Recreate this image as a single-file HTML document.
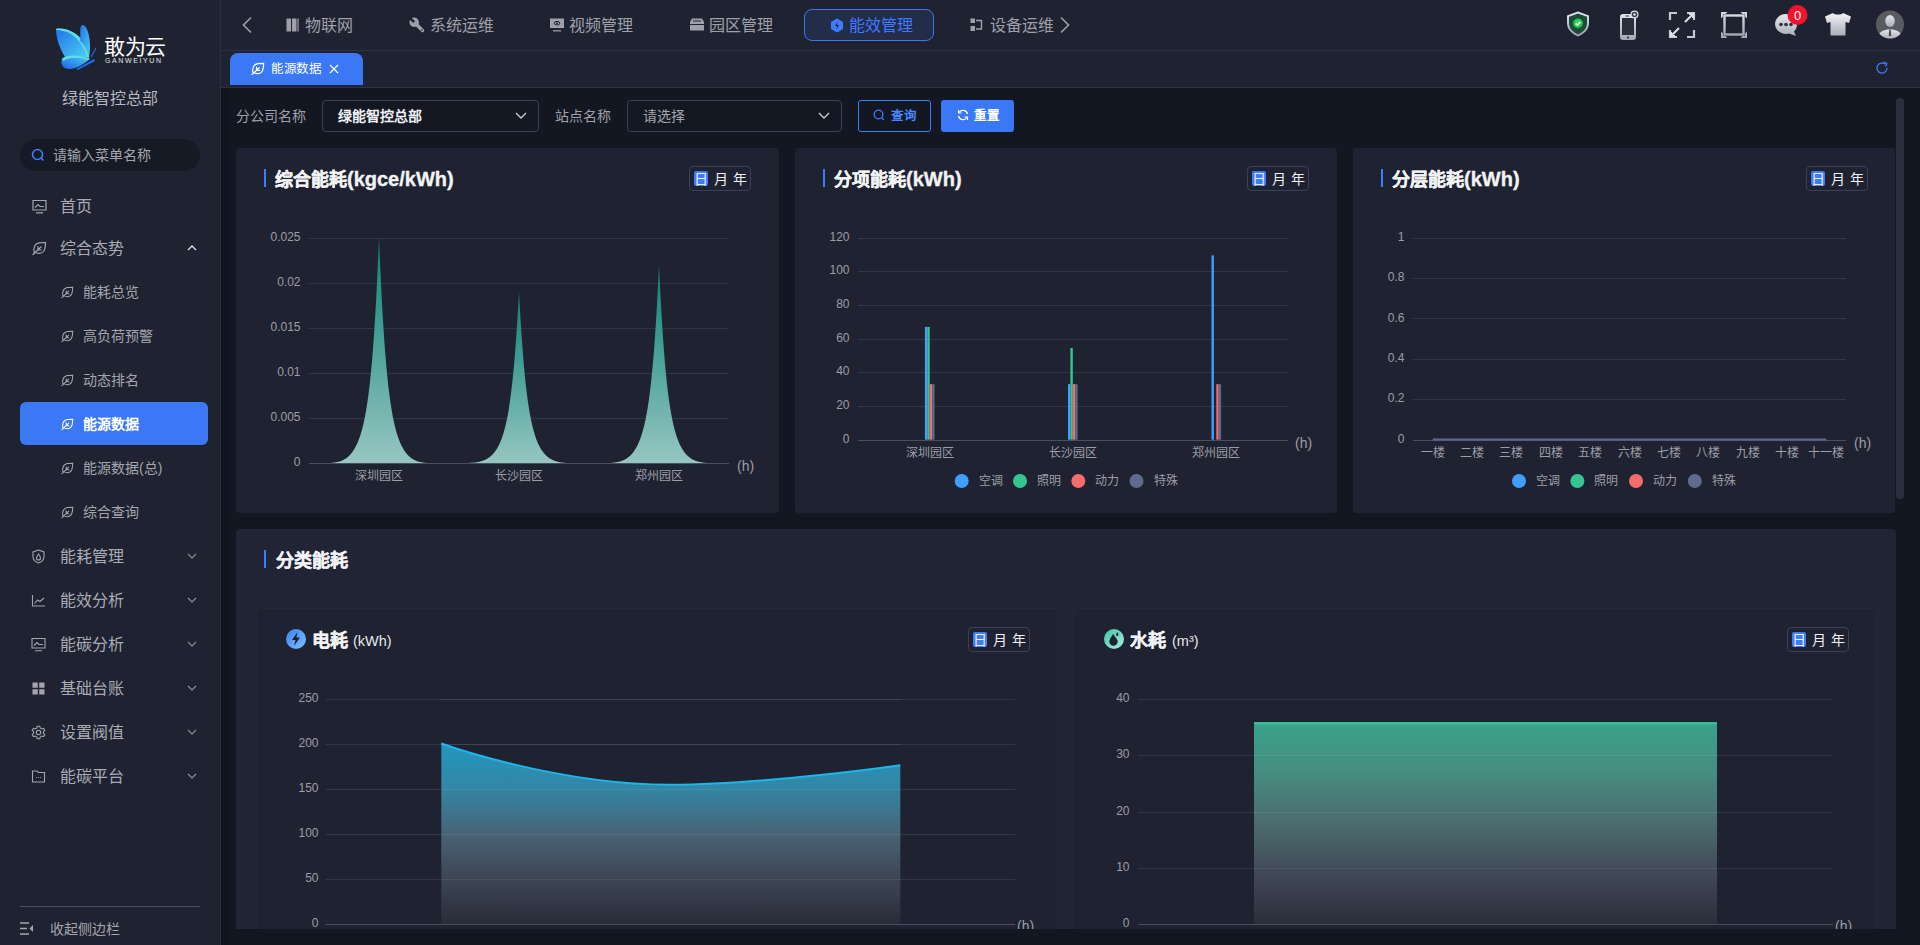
<!DOCTYPE html>
<html lang="zh-CN">
<head>
<meta charset="utf-8">
<style>
*{margin:0;padding:0;box-sizing:border-box}
html,body{width:1920px;height:945px;overflow:hidden;background:#131722;font-family:"Liberation Sans",sans-serif;color:#a3a6ae}
.a{position:absolute}
.t{position:absolute;white-space:nowrap;line-height:20px}
#side{left:0;top:0;width:221px;height:945px;background:#1f2331;border-right:1px solid #2a2f3d}
#head{left:221px;top:0;width:1699px;height:51px;background:#1f2331;border-bottom:1px solid #2c3142}
#tabs{left:221px;top:51px;width:1699px;height:37px;background:#1f2331;border-bottom:1px solid #2c3142}
.card{position:absolute;background:#1f2331;border-radius:4px}
.ttl{position:absolute;font-size:20px;font-weight:bold;color:#f2f3f5;line-height:24px;-webkit-text-stroke:0.35px #f2f3f5}
.bar4{position:absolute;width:2px;height:18px;background:#3d7bff}
.ttl span{font-size:20px}
.dmy{position:absolute;width:62px;height:25px;border:1px solid #384158;border-radius:4px}
.dmy i{position:absolute;font-style:normal;font-size:14px;color:#f0f1f4;line-height:16px;top:4px}
.dmy b{position:absolute;left:4px;top:4px;width:14px;height:15px;background:#3d7bff;border-radius:2px}
.menu{font-size:16px;color:#a9acb4}
.sub{font-size:14px;color:#a3a6ae}
</style>
</head>
<body>
<!-- SIDEBAR -->
<div id="side" class="a">
  <svg class="a" style="left:54px;top:24px" width="44" height="46" viewBox="0 0 44 46">
    <defs>
      <linearGradient id="bw1" x1="0" y1="0" x2="1" y2="1"><stop offset="0" stop-color="#1f74e8"/><stop offset="1" stop-color="#4fd0f5"/></linearGradient>
      <linearGradient id="bw2" x1="0" y1="1" x2="1" y2="0"><stop offset="0" stop-color="#1a62e6"/><stop offset="1" stop-color="#4fd2f4"/></linearGradient>
    </defs>
    <path d="M2,5 C10,3 22,8 28,16 C33,22 35,30 35,34 C28,32 18,33 11,33 C6,25 2,14 2,5Z" fill="url(#bw1)"/>
    <path d="M2,5 C10,3 22,8 28,16 C33,22 35,30 35,34 L33,33 C31,25 25,15 17,10 C12,7 6,6 2,6Z" fill="#5fe0e0"/>
    <path d="M28,1 C33,0 36,12 36,22 C36,28 35,32 35,34 C33,26 30,20 26,17 C27,10 25,3 28,1Z" fill="url(#bw1)"/>
    <path d="M8,35 C14,30 26,31 36,35 C30,40 22,45 15,45 C9,45 6,40 8,35Z" fill="url(#bw2)"/>
    <path d="M8,35 C14,30 26,31 36,35 L34,36 C26,33 15,33 9,37Z" fill="#5fe0e0"/>
    <path d="M22,45 L40,35 L41,37 L24,46Z" fill="#1e6af0"/>
    <path d="M37,33 L42,24" stroke="#1e6af0" stroke-width="1.2"/>
  </svg>
  <div class="t" style="left:104px;top:36px;font-size:21px;color:#fff;line-height:22px;letter-spacing:-0.5px">敢为云</div>
  <div class="t" style="left:105px;top:57px;font-size:7px;color:#e8e8ea;line-height:8px;letter-spacing:1.6px">GANWEIYUN</div>
  <div class="t" style="left:62px;top:89px;font-size:16px;color:#b6b9c1">绿能智控总部</div>
  <div class="a" style="left:20px;top:139px;width:180px;height:32px;border-radius:16px;background:#161a25"></div>
  <svg class="a" style="left:31px;top:148px" width="14" height="14" viewBox="0 0 14 14"><circle cx="6.5" cy="6.5" r="5" fill="none" stroke="#3d7bff" stroke-width="1.6"/><path d="M10,10 L12.5,12.5" stroke="#3d7bff" stroke-width="1.6"/></svg>
  <div class="t" style="left:53px;top:145px;font-size:14px;color:#a3a6ae">请输入菜单名称</div>

  <svg class="a" style="left:32px;top:199px" width="15" height="15" viewBox="0 0 15 15"><path d="M1,1.5H14V11H1Z M4,13.8H11 M3,8.5 L6,5.5 L8,7.5 L12,7.5" fill="none" stroke="#a3a6ae" stroke-width="1.2"/></svg>
  <div class="t menu" style="left:60px;top:197px">首页</div>
  <svg class="a" style="left:32px;top:241px" width="15" height="15" viewBox="0 0 15 15"><path d="M2.5,12.5 C1,8 2,2.5 7.5,1.8 C10,1.5 12.5,1.5 13.5,1.5 C13.5,4 13.5,8 11.5,10.5 C9.5,13 5,13 3.5,11 M1,13.5 L9,6 M6,9 L6,5.5 M6,9 L9.2,9" fill="none" stroke="#a3a6ae" stroke-width="1.2" stroke-linecap="round"/></svg>
  <div class="t menu" style="left:60px;top:239px">综合态势</div>
  <svg class="a" style="left:187px;top:245px" width="10" height="6" viewBox="0 0 10 6"><path d="M1,5 L5,1 L9,5" fill="none" stroke="#dfe1e6" stroke-width="1.3"/></svg>
  <div class="a" style="left:20px;top:402px;width:188px;height:43px;border-radius:6px;background:#3b78f5"></div>
  <svg class="a" style="left:61px;top:286px" width="13" height="13" viewBox="0 0 15 15"><path d="M2.5,12.5 C1,8 2,2.5 7.5,1.8 C10,1.5 12.5,1.5 13.5,1.5 C13.5,4 13.5,8 11.5,10.5 C9.5,13 5,13 3.5,11 M1,13.5 L9,6 M6,9 L6,5.5 M6,9 L9.2,9" fill="none" stroke="#a3a6ae" stroke-width="1.2" stroke-linecap="round"/></svg>
  <div class="t sub" style="left:83px;top:282px;">能耗总览</div>
  <svg class="a" style="left:61px;top:330px" width="13" height="13" viewBox="0 0 15 15"><path d="M2.5,12.5 C1,8 2,2.5 7.5,1.8 C10,1.5 12.5,1.5 13.5,1.5 C13.5,4 13.5,8 11.5,10.5 C9.5,13 5,13 3.5,11 M1,13.5 L9,6 M6,9 L6,5.5 M6,9 L9.2,9" fill="none" stroke="#a3a6ae" stroke-width="1.2" stroke-linecap="round"/></svg>
  <div class="t sub" style="left:83px;top:326px;">高负荷预警</div>
  <svg class="a" style="left:61px;top:374px" width="13" height="13" viewBox="0 0 15 15"><path d="M2.5,12.5 C1,8 2,2.5 7.5,1.8 C10,1.5 12.5,1.5 13.5,1.5 C13.5,4 13.5,8 11.5,10.5 C9.5,13 5,13 3.5,11 M1,13.5 L9,6 M6,9 L6,5.5 M6,9 L9.2,9" fill="none" stroke="#a3a6ae" stroke-width="1.2" stroke-linecap="round"/></svg>
  <div class="t sub" style="left:83px;top:370px;">动态排名</div>
  <svg class="a" style="left:61px;top:418px" width="13" height="13" viewBox="0 0 15 15"><path d="M2.5,12.5 C1,8 2,2.5 7.5,1.8 C10,1.5 12.5,1.5 13.5,1.5 C13.5,4 13.5,8 11.5,10.5 C9.5,13 5,13 3.5,11 M1,13.5 L9,6 M6,9 L6,5.5 M6,9 L9.2,9" fill="none" stroke="#ffffff" stroke-width="1.2" stroke-linecap="round"/></svg>
  <div class="t sub" style="left:83px;top:414px;color:#fff;font-weight:bold">能源数据</div>
  <svg class="a" style="left:61px;top:462px" width="13" height="13" viewBox="0 0 15 15"><path d="M2.5,12.5 C1,8 2,2.5 7.5,1.8 C10,1.5 12.5,1.5 13.5,1.5 C13.5,4 13.5,8 11.5,10.5 C9.5,13 5,13 3.5,11 M1,13.5 L9,6 M6,9 L6,5.5 M6,9 L9.2,9" fill="none" stroke="#a3a6ae" stroke-width="1.2" stroke-linecap="round"/></svg>
  <div class="t sub" style="left:83px;top:458px;">能源数据(总)</div>
  <svg class="a" style="left:61px;top:506px" width="13" height="13" viewBox="0 0 15 15"><path d="M2.5,12.5 C1,8 2,2.5 7.5,1.8 C10,1.5 12.5,1.5 13.5,1.5 C13.5,4 13.5,8 11.5,10.5 C9.5,13 5,13 3.5,11 M1,13.5 L9,6 M6,9 L6,5.5 M6,9 L9.2,9" fill="none" stroke="#a3a6ae" stroke-width="1.2" stroke-linecap="round"/></svg>
  <div class="t sub" style="left:83px;top:502px;">综合查询</div>
  <svg class="a" style="left:31px;top:549px" width="15" height="15" viewBox="0 0 15 15"><path d="M7.5,1 L13,3 V7.5 C13,11 10.5,13 7.5,14 C4.5,13 2,11 2,7.5 V3Z M7.5,5 C6,7 5.5,8 5.5,9 A2,2 0 0 0 9.5,9 C9.5,8 9,7 7.5,5Z" fill="none" stroke="#a3a6ae" stroke-width="1.1"/></svg>
  <div class="t menu" style="left:60px;top:547px">能耗管理</div>
  <svg class="a" style="left:187px;top:553px" width="10" height="6" viewBox="0 0 10 6"><path d="M1,1 L5,5 L9,1" fill="none" stroke="#8d9099" stroke-width="1.1"/></svg>
  <svg class="a" style="left:31px;top:593px" width="15" height="15" viewBox="0 0 15 15"><path d="M1.5,2 V13 H14 M3.5,10.5 L6.5,7 L9,8.5 L13,5" fill="none" stroke="#a3a6ae" stroke-width="1.1"/></svg>
  <div class="t menu" style="left:60px;top:591px">能效分析</div>
  <svg class="a" style="left:187px;top:597px" width="10" height="6" viewBox="0 0 10 6"><path d="M1,1 L5,5 L9,1" fill="none" stroke="#8d9099" stroke-width="1.1"/></svg>
  <svg class="a" style="left:31px;top:637px" width="15" height="15" viewBox="0 0 15 15"><path d="M1,1.5H14V11H1Z M4,13.8H11 M3,8.5 L6,5.5 L8,7.5 L12,7.5" fill="none" stroke="#a3a6ae" stroke-width="1.1"/></svg>
  <div class="t menu" style="left:60px;top:635px">能碳分析</div>
  <svg class="a" style="left:187px;top:641px" width="10" height="6" viewBox="0 0 10 6"><path d="M1,1 L5,5 L9,1" fill="none" stroke="#8d9099" stroke-width="1.1"/></svg>
  <svg class="a" style="left:31px;top:681px" width="15" height="15" viewBox="0 0 15 15"><path d="M1.5,1.5H6.8V6.8H1.5Z M8.2,1.5H13.5V6.8H8.2Z M1.5,8.2H6.8V13.5H1.5Z M8.2,8.2H13.5V13.5H8.2Z" fill="#a3a6ae"/></svg>
  <div class="t menu" style="left:60px;top:679px">基础台账</div>
  <svg class="a" style="left:187px;top:685px" width="10" height="6" viewBox="0 0 10 6"><path d="M1,1 L5,5 L9,1" fill="none" stroke="#8d9099" stroke-width="1.1"/></svg>
  <svg class="a" style="left:31px;top:725px" width="15" height="15" viewBox="0 0 15 15"><circle cx="7.5" cy="7.5" r="2.2" fill="none" stroke="#a3a6ae" stroke-width="1.1"/><path d="M6.3,1.2 H8.7 L9.2,3 L10.8,3.9 L12.6,3.3 L13.8,5.4 L12.4,6.7 V8.3 L13.8,9.6 L12.6,11.7 L10.8,11.1 L9.2,12 L8.7,13.8 H6.3 L5.8,12 L4.2,11.1 L2.4,11.7 L1.2,9.6 L2.6,8.3 V6.7 L1.2,5.4 L2.4,3.3 L4.2,3.9 L5.8,3Z" fill="none" stroke="#a3a6ae" stroke-width="1.1"/></svg>
  <div class="t menu" style="left:60px;top:723px">设置阀值</div>
  <svg class="a" style="left:187px;top:729px" width="10" height="6" viewBox="0 0 10 6"><path d="M1,1 L5,5 L9,1" fill="none" stroke="#8d9099" stroke-width="1.1"/></svg>
  <svg class="a" style="left:31px;top:769px" width="15" height="15" viewBox="0 0 15 15"><path d="M1.5,2 H6 L7.5,3.5 H13.5 V13 H1.5Z M5,8.5 H5.8 M7.1,8.5 H7.9 M9.2,8.5 H10" fill="none" stroke="#a3a6ae" stroke-width="1.1"/></svg>
  <div class="t menu" style="left:60px;top:767px">能碳平台</div>
  <svg class="a" style="left:187px;top:773px" width="10" height="6" viewBox="0 0 10 6"><path d="M1,1 L5,5 L9,1" fill="none" stroke="#8d9099" stroke-width="1.1"/></svg>
  <div class="a" style="left:20px;top:906px;width:180px;height:1px;background:#4a4f5e"></div>
  <svg class="a" style="left:20px;top:922px" width="14" height="13" viewBox="0 0 14 13"><path d="M0,1H9M0,6.5H7M0,12H9" stroke="#a3a6ae" stroke-width="1.5"/><path d="M13,3 L9.5,6.5 L13,10Z" fill="#a3a6ae"/></svg>
  <div class="t" style="left:50px;top:919px;font-size:14px;color:#a3a6ae">收起侧边栏</div>
</div>

<!-- HEADER -->

<div id="head" class="a"></div>
<svg class="a" style="left:241px;top:16px" width="12" height="18" viewBox="0 0 12 18"><path d="M10,1.5 L2.5,9 L10,16.5" fill="none" stroke="#9ea1aa" stroke-width="1.6"/></svg>
<svg class="a" style="left:286px;top:18px" width="14" height="14" viewBox="0 0 14 14"><path d="M0.5,0.5H5V13.5H0.5Z M6,0.5H10.5V13.5H6Z" fill="#9ea1aa"/><path d="M12,0.5V13.5" stroke="#9ea1aa" stroke-width="1.2"/></svg>
<div class="t" style="left:305px;top:16px;font-size:16px;color:#9ea1aa">物联网</div>
<svg class="a" style="left:409px;top:17px" width="16" height="16" viewBox="0 0 16 16"><circle cx="5.2" cy="5.2" r="4.7" fill="#9ea1aa"/><path d="M1.6,1.6 L5.2,5.2" stroke="#1f2331" stroke-width="2.6"/><path d="M6.5,6.5 L13.5,13.5" stroke="#9ea1aa" stroke-width="3.4" stroke-linecap="round"/><circle cx="12.9" cy="12.9" r="0.8" fill="#1f2331"/></svg>
<div class="t" style="left:430px;top:16px;font-size:16px;color:#9ea1aa">系统运维</div>
<svg class="a" style="left:550px;top:18px" width="14" height="14" viewBox="0 0 14 14"><path d="M0,0.5H14V10H0Z" fill="#9ea1aa"/><path d="M3,12.8H11" stroke="#9ea1aa" stroke-width="1.3"/><ellipse cx="7" cy="5.2" rx="2.8" ry="1.8" fill="none" stroke="#1f2331" stroke-width="1"/><circle cx="7" cy="5.2" r="0.9" fill="#1f2331"/></svg>
<div class="t" style="left:569px;top:16px;font-size:16px;color:#9ea1aa">视频管理</div>
<svg class="a" style="left:690px;top:18px" width="14" height="13" viewBox="0 0 14 13"><path d="M2,0.5H12L14,4V6H0V4Z M0,7H14V12.5H0Z" fill="#9ea1aa"/><path d="M3,3H11" stroke="#1f2331" stroke-width="1"/></svg>
<div class="t" style="left:709px;top:16px;font-size:16px;color:#9ea1aa">园区管理</div>
<div class="a" style="left:804px;top:9px;width:130px;height:32px;border:1px solid #3a78f0;border-radius:8px;background:#232c48"></div>
<svg class="a" style="left:830px;top:18px" width="14" height="15" viewBox="0 0 14 15"><path d="M7,0.5 L13,4 V11 L7,14.5 L1,11 V4Z" fill="#3d7bff"/><path d="M7.8,3.5 L5,8 H7.2 L6.2,11.5 L9,7 H6.8Z" fill="#1f2331"/></svg>
<div class="t" style="left:849px;top:16px;font-size:16px;color:#3d7bff">能效管理</div>
<svg class="a" style="left:970px;top:18px" width="14" height="14" viewBox="0 0 14 14"><path d="M0.5,0.5H5V5H0.5Z M0.5,8H5V13H0.5Z" fill="#9ea1aa"/><path d="M6,2.5H11.5V11H6" fill="none" stroke="#9ea1aa" stroke-width="1.4"/></svg>
<div class="t" style="left:990px;top:16px;font-size:16px;color:#9ea1aa">设备运维</div>
<svg class="a" style="left:1059px;top:16px" width="12" height="18" viewBox="0 0 12 18"><path d="M2,1.5 L9.5,9 L2,16.5" fill="none" stroke="#9ea1aa" stroke-width="1.6"/></svg>

<!-- right icons -->
<svg class="a" style="left:1565px;top:11px" width="26" height="26" viewBox="0 0 26 26">
 <defs><linearGradient id="shg" x1="0" y1="0" x2="0" y2="1"><stop offset="0" stop-color="#e8eaee"/><stop offset="1" stop-color="#9aa0ab"/></linearGradient>
 <radialGradient id="gg" cx="0.5" cy="0.4" r="0.6"><stop offset="0" stop-color="#3ef06a"/><stop offset="1" stop-color="#0fa83a"/></radialGradient></defs>
 <path d="M13,0.5 L24,4.5 V12 C24,18.5 19,23 13,25.5 C7,23 2,18.5 2,12 V4.5Z" fill="url(#shg)"/>
 <path d="M13,2.5 L22,5.8 V12 C22,17.5 18,21.3 13,23.5 C8,21.3 4,17.5 4,12 V5.8Z" fill="#1e4a3a"/>
 <circle cx="13" cy="12.5" r="5" fill="url(#gg)"/>
 <path d="M10.6,12.6 L12.4,14.3 L15.6,11" fill="none" stroke="#fff" stroke-width="1.5"/>
</svg>
<svg class="a" style="left:1619px;top:10px" width="20" height="32" viewBox="0 0 20 32">
 <defs><linearGradient id="phg" x1="0" y1="0" x2="0" y2="1"><stop offset="0" stop-color="#dfe2e8"/><stop offset="1" stop-color="#a2a8b5"/></linearGradient></defs>
 <rect x="1" y="4" width="16" height="26" rx="3" fill="url(#phg)"/>
 <rect x="3" y="8" width="12" height="17" fill="#2a2f3d"/>
 <circle cx="9" cy="27.5" r="1.1" fill="#2a2f3d"/>
 <path d="M6.5,6 H10" stroke="#2a2f3d" stroke-width="0.9"/>
 <circle cx="15.5" cy="4.5" r="4" fill="#dfe2e8"/>
 <circle cx="15.5" cy="4.5" r="2.8" fill="#3a3f4c"/>
 <circle cx="15.5" cy="4.5" r="1.2" fill="#dfe2e8"/>
</svg>
<svg class="a" style="left:1668px;top:11px" width="28" height="28" viewBox="0 0 28 28">
 <path d="M2,9 V2 H9 M19,26 H26 V19 M2,19 V26 H9 M26,9 V2 H19" fill="none" stroke="#c5c9d1" stroke-width="2.2"/>
 <path d="M17,11 L25,3 M21,3 H25 V7 M11,17 L3,25 M3,21 V25 H7" fill="none" stroke="#dde0e6" stroke-width="2"/>
</svg>
<svg class="a" style="left:1720px;top:11px" width="28" height="28" viewBox="0 0 28 28">
 <defs><linearGradient id="sqg" x1="0" y1="0" x2="0" y2="1"><stop offset="0" stop-color="#d5d8de"/><stop offset="1" stop-color="#a3a9b6"/></linearGradient></defs>
 <path d="M1,1 H7.5 L5.5,3 H3 V5.5 L1,7.5Z M27,1 V7.5 L25,5.5 V3 H22.5 L20.5,1Z M27,27 H20.5 L22.5,25 H25 V22.5 L27,20.5Z M1,27 V20.5 L3,22.5 V25 H5.5 L7.5,27Z" fill="url(#sqg)"/>
 <rect x="4.5" y="4.5" width="19" height="19" fill="none" stroke="url(#sqg)" stroke-width="2.4"/>
</svg>
<svg class="a" style="left:1773px;top:5px" width="36" height="32" viewBox="0 0 36 32">
 <defs><linearGradient id="chg" x1="0" y1="0" x2="0" y2="1"><stop offset="0" stop-color="#e6e8ec"/><stop offset="1" stop-color="#a9aeb9"/></linearGradient></defs>
 <path d="M13,9 C19,9 24,13 24,19 C24,22 23,25 21,26.5 L23,31 L16,28.5 C15,28.8 14,29 13,29 C7,29 2,24.5 2,19 C2,13.5 7,9 13,9Z" fill="url(#chg)"/>
 <circle cx="8" cy="19.5" r="1.8" fill="#2a2f3d"/><circle cx="13" cy="19.5" r="1.8" fill="#2a2f3d"/><circle cx="18" cy="19.5" r="1.8" fill="#2a2f3d"/>
 <circle cx="24.5" cy="10" r="10" fill="#f0142f"/>
 <text x="24.5" y="14.5" text-anchor="middle" font-family="Liberation Sans" font-size="13" fill="#fff">0</text>
</svg>
<svg class="a" style="left:1824px;top:12px" width="28" height="24" viewBox="0 0 28 24">
 <defs><linearGradient id="tsg" x1="0" y1="0" x2="0" y2="1"><stop offset="0" stop-color="#f2f3f6"/><stop offset="1" stop-color="#a8aebb"/></linearGradient></defs>
 <path d="M9,1 C10.5,3 17.5,3 19,1 L27,4.5 L25,11 L21.5,10 V23.5 H6.5 V10 L3,11 L1,4.5Z" fill="url(#tsg)"/>
</svg>
<svg class="a" style="left:1876px;top:10px" width="28" height="29" viewBox="0 0 28 29">
 <defs><clipPath id="avc"><circle cx="14" cy="14.5" r="14"/></clipPath>
 <linearGradient id="avg" x1="0" y1="0" x2="0" y2="1"><stop offset="0" stop-color="#e4e6ea"/><stop offset="1" stop-color="#a7acb6"/></linearGradient></defs>
 <circle cx="14" cy="14.5" r="14" fill="#5a5b5e"/>
 <g clip-path="url(#avc)">
 <ellipse cx="14" cy="11" rx="4.8" ry="6" fill="url(#avg)"/>
 <path d="M1,29 C2,22 7,19.5 14,19.5 C21,19.5 26,22 27,29Z" fill="url(#avg)"/>
 <path d="M13.2,20 H14.8 L15.3,26 H12.7Z" fill="#4a4b4e"/>
 </g>
</svg>

<div id="tabs" class="a"></div>
<div class="a" style="left:230px;top:53px;width:133px;height:32px;border-radius:8px 8px 0 0;background:#3b78f5"></div>
<svg class="a" style="left:251px;top:62px" width="14" height="14" viewBox="0 0 15 15"><path d="M2.5,12.5 C1,8 2,2.5 7.5,1.8 C10,1.5 12.5,1.5 13.5,1.5 C13.5,4 13.5,8 11.5,10.5 C9.5,13 5,13 3.5,11 M1,13.5 L9,6 M6,9 L6,5.5 M6,9 L9.2,9" fill="none" stroke="#fff" stroke-width="1.3" stroke-linecap="round"/></svg>
<div class="t" style="left:271px;top:59px;font-size:12.5px;color:#fff;letter-spacing:-0.3px">能源数据</div>
<svg class="a" style="left:329px;top:64px" width="10" height="10" viewBox="0 0 10 10"><path d="M1,1 L9,9 M9,1 L1,9" stroke="#fff" stroke-width="1.2"/></svg>
<svg class="a" style="left:1875px;top:61px" width="14" height="14" viewBox="0 0 14 14"><path d="M12,7 A5,5 0 1 1 10.2,3.2" fill="none" stroke="#3d7bff" stroke-width="1.3"/><path d="M8.5,1.2 L11.8,2.5 L10.8,5.5" fill="none" stroke="#3d7bff" stroke-width="1.3"/></svg>

<!-- FILTER -->
<div class="t" style="left:236px;top:106px;font-size:14px;color:#9ea1aa">分公司名称</div>
<div class="a" style="left:322px;top:100px;width:217px;height:32px;border:1px solid #3a4153;border-radius:4px;background:#141823"></div>
<div class="t" style="left:338px;top:106px;font-size:14px;color:#eef0f4;font-weight:bold">绿能智控总部</div>
<svg class="a" style="left:515px;top:112px" width="12" height="7" viewBox="0 0 12 7"><path d="M1,1 L6,6 L11,1" fill="none" stroke="#c8cbd2" stroke-width="1.4"/></svg>
<div class="t" style="left:555px;top:106px;font-size:14px;color:#9ea1aa">站点名称</div>
<div class="a" style="left:627px;top:100px;width:215px;height:32px;border:1px solid #3a4153;border-radius:4px;background:#141823"></div>
<div class="t" style="left:643px;top:106px;font-size:14px;color:#a3a6ae">请选择</div>
<svg class="a" style="left:818px;top:112px" width="12" height="7" viewBox="0 0 12 7"><path d="M1,1 L6,6 L11,1" fill="none" stroke="#c8cbd2" stroke-width="1.4"/></svg>
<div class="a" style="left:858px;top:100px;width:73px;height:32px;border:1px solid #3d7bff;border-radius:3px"></div>
<svg class="a" style="left:873px;top:109px" width="12" height="12" viewBox="0 0 12 12"><circle cx="5.5" cy="5.5" r="4.3" fill="none" stroke="#3d7bff" stroke-width="1.3"/><path d="M8.6,8.6 L11,11" stroke="#3d7bff" stroke-width="1.3"/></svg>
<div class="t" style="left:891px;top:106px;font-size:12.5px;color:#4a86ff;font-weight:bold">查询</div>
<div class="a" style="left:941px;top:100px;width:73px;height:32px;border-radius:3px;background:#3b78f5"></div>
<svg class="a" style="left:957px;top:109px" width="12" height="12" viewBox="0 0 12 12"><path d="M10.5,5 A4.7,4.7 0 0 0 2,3.5 M1.5,7 A4.7,4.7 0 0 0 10,8.5" fill="none" stroke="#fff" stroke-width="1.3"/><path d="M1.5,1 V4 H4.5 M10.5,11 V8 H7.5" fill="none" stroke="#fff" stroke-width="1.2"/></svg>
<div class="t" style="left:974px;top:106px;font-size:12.5px;color:#fff;font-weight:bold">重置</div>

<!-- CARDS -->
<div class="card" style="left:236px;top:148px;width:543px;height:365px"></div>
<div class="card" style="left:795px;top:148px;width:542px;height:365px"></div>
<div class="card" style="left:1353px;top:148px;width:542px;height:365px"></div>
<div class="bar4" style="left:264px;top:169px"></div>
<div class="ttl" style="left:275px;top:167px;font-size:18px">综合能耗<span>(kgce/kWh)</span></div>
<div class="dmy" style="left:689px;top:166px"><b></b><i style="left:4px">日</i><i style="left:24px">月</i><i style="left:43px">年</i></div>
<div class="bar4" style="left:823px;top:169px"></div>
<div class="ttl" style="left:834px;top:167px;font-size:18px">分项能耗<span>(kWh)</span></div>
<div class="dmy" style="left:1247px;top:166px"><b></b><i style="left:4px">日</i><i style="left:24px">月</i><i style="left:43px">年</i></div>
<div class="bar4" style="left:1381px;top:169px"></div>
<div class="ttl" style="left:1392px;top:167px;font-size:18px">分层能耗<span>(kWh)</span></div>
<div class="dmy" style="left:1806px;top:166px"><b></b><i style="left:4px">日</i><i style="left:24px">月</i><i style="left:43px">年</i></div>

<div class="a" style="left:236px;top:529px;width:1660px;height:400px;background:#202435;border-radius:4px 4px 0 0;overflow:hidden">
  <div class="a" style="left:20px;top:79px;width:802px;height:340px;border-radius:4px;border:1px solid rgba(255,255,255,0.025);background:#1f2331"></div>
  <div class="a" style="left:837px;top:79px;width:804px;height:340px;border-radius:4px;border:1px solid rgba(255,255,255,0.025);background:#1f2331"></div>
</div>
<div class="bar4" style="left:264px;top:550px;height:18px"></div>
<div class="ttl" style="left:276px;top:549px;font-size:18px">分类能耗</div>

<svg class="a" style="left:285px;top:628px" width="22" height="22" viewBox="-0.5 -0.5 22 22"><defs><linearGradient id="elg" x1="0" y1="0" x2="1" y2="1"><stop offset="0" stop-color="#3b82f0"/><stop offset="1" stop-color="#7cc0ff"/></linearGradient></defs><circle cx="10.5" cy="10.5" r="10" fill="url(#elg)"/><path d="M12,3.5 L6.5,11.5 H10 L8.5,17.5 L14.5,9 H11Z" fill="#1f2331"/></svg>
<div class="ttl" style="left:312px;top:629px;font-size:18px">电耗</div>
<div class="t" style="left:353px;top:631px;font-size:14.5px;color:#e4e6ea">(kWh)</div>
<div class="dmy" style="left:968px;top:627px"><b></b><i style="left:4px">日</i><i style="left:24px">月</i><i style="left:43px">年</i></div>

<svg class="a" style="left:1103px;top:628px" width="22" height="22" viewBox="-0.5 -0.5 22 22"><defs><linearGradient id="wlg" x1="0" y1="0" x2="1" y2="1"><stop offset="0" stop-color="#3fc3a6"/><stop offset="1" stop-color="#a6f0dd"/></linearGradient></defs><circle cx="10.5" cy="10.5" r="10" fill="url(#wlg)"/><path d="M9.5,5.5 C7.5,8.5 5.8,11 5.8,13 A4.2,4.2 0 0 0 14.2,13 C14.2,11 12,8.5 9.5,5.5Z" fill="#1f2331"/><path d="M13.8,3.5 C13,4.8 12.6,5.6 12.6,6.3 A1.2,1.2 0 0 0 15,6.3 C15,5.6 14.6,4.8 13.8,3.5Z" fill="#1f2331"/></svg>
<div class="ttl" style="left:1130px;top:629px;font-size:18px">水耗</div>
<div class="t" style="left:1172px;top:631px;font-size:14.5px;color:#e4e6ea">(m³)</div>
<div class="dmy" style="left:1787px;top:627px"><b></b><i style="left:4px">日</i><i style="left:24px">月</i><i style="left:43px">年</i></div>
<!--CHARTS-->
<svg class="a" style="left:0;top:0" width="1920" height="929" viewBox="0 0 1920 929" font-family="Liberation Sans, sans-serif"><path d="M309,463.5H729" stroke="#4a4f5e" stroke-width="1"/>
<text x="300.5" y="466.0" font-size="12" text-anchor="end" fill="#9b9ea6" >0</text>
<path d="M309,418.5H729" stroke="#323747" stroke-width="1"/>
<text x="300.5" y="421.0" font-size="12" text-anchor="end" fill="#9b9ea6" >0.005</text>
<path d="M309,373.5H729" stroke="#323747" stroke-width="1"/>
<text x="300.5" y="376.0" font-size="12" text-anchor="end" fill="#9b9ea6" >0.01</text>
<path d="M309,328.5H729" stroke="#323747" stroke-width="1"/>
<text x="300.5" y="331.0" font-size="12" text-anchor="end" fill="#9b9ea6" >0.015</text>
<path d="M309,283.5H729" stroke="#323747" stroke-width="1"/>
<text x="300.5" y="286.0" font-size="12" text-anchor="end" fill="#9b9ea6" >0.02</text>
<path d="M309,238.5H729" stroke="#323747" stroke-width="1"/>
<text x="300.5" y="241.0" font-size="12" text-anchor="end" fill="#9b9ea6" >0.025</text>
<defs><linearGradient id="sp" x1="0" y1="0" x2="0" y2="1"><stop offset="0" stop-color="#0f8275"/><stop offset="0.35" stop-color="#3a9a90"/><stop offset="1" stop-color="#96c6c1"/></linearGradient></defs>
<path d="M327.50,463.00 L430.50,463.00 C396.51,463.00 387.24,440.50 379.00,238.00 C370.76,440.50 361.49,463.00 327.50,463.00Z" fill="url(#sp)"/>
<path d="M467.50,463.00 L570.50,463.00 C536.51,463.00 527.24,445.90 519.00,292.00 C510.76,445.90 501.49,463.00 467.50,463.00Z" fill="url(#sp)"/>
<path d="M607.50,463.00 L710.50,463.00 C676.51,463.00 667.24,443.20 659.00,265.00 C650.76,443.20 641.49,463.00 607.50,463.00Z" fill="url(#sp)"/>
<text x="379" y="480" font-size="12" text-anchor="middle" fill="#9b9ea6" >深圳园区</text>
<text x="519" y="480" font-size="12" text-anchor="middle" fill="#9b9ea6" >长沙园区</text>
<text x="659" y="480" font-size="12" text-anchor="middle" fill="#9b9ea6" >郑州园区</text>
<text x="737" y="471" font-size="14" text-anchor="start" fill="#9b9ea6" >(h)</text>
<path d="M858,440.5H1288" stroke="#4a4f5e" stroke-width="1"/>
<text x="849.5" y="442.7" font-size="12" text-anchor="end" fill="#9b9ea6" >0</text>
<path d="M858,406.5H1288" stroke="#323747" stroke-width="1"/>
<text x="849.5" y="409.03" font-size="12" text-anchor="end" fill="#9b9ea6" >20</text>
<path d="M858,372.5H1288" stroke="#323747" stroke-width="1"/>
<text x="849.5" y="375.36" font-size="12" text-anchor="end" fill="#9b9ea6" >40</text>
<path d="M858,339.5H1288" stroke="#323747" stroke-width="1"/>
<text x="849.5" y="341.69" font-size="12" text-anchor="end" fill="#9b9ea6" >60</text>
<path d="M858,305.5H1288" stroke="#323747" stroke-width="1"/>
<text x="849.5" y="308.02" font-size="12" text-anchor="end" fill="#9b9ea6" >80</text>
<path d="M858,271.5H1288" stroke="#323747" stroke-width="1"/>
<text x="849.5" y="274.34999999999997" font-size="12" text-anchor="end" fill="#9b9ea6" >100</text>
<path d="M858,238.5H1288" stroke="#323747" stroke-width="1"/>
<text x="849.5" y="240.67999999999998" font-size="12" text-anchor="end" fill="#9b9ea6" >120</text>
<rect x="924.90" y="326.92" width="2.4" height="112.78" fill="#409eff"/>
<rect x="927.30" y="326.92" width="2.4" height="112.78" fill="#36c591"/>
<rect x="929.70" y="384.15" width="2.4" height="55.55" fill="#f56c6c"/>
<rect x="932.10" y="384.15" width="2.4" height="55.55" fill="#5f6a8f"/>
<rect x="1068.00" y="384.15" width="2.4" height="55.55" fill="#409eff"/>
<rect x="1070.40" y="347.96" width="2.4" height="91.74" fill="#36c591"/>
<rect x="1072.80" y="384.15" width="2.4" height="55.55" fill="#f56c6c"/>
<rect x="1075.20" y="384.15" width="2.4" height="55.55" fill="#5f6a8f"/>
<rect x="1211.50" y="255.38" width="2.4" height="184.32" fill="#409eff"/>
<rect x="1216.30" y="384.15" width="2.4" height="55.55" fill="#f56c6c"/>
<rect x="1218.70" y="384.15" width="2.4" height="55.55" fill="#5f6a8f"/>
<text x="929.7" y="457" font-size="12" text-anchor="middle" fill="#9b9ea6" >深圳园区</text>
<text x="1072.8" y="457" font-size="12" text-anchor="middle" fill="#9b9ea6" >长沙园区</text>
<text x="1216.3" y="457" font-size="12" text-anchor="middle" fill="#9b9ea6" >郑州园区</text>
<text x="1295" y="448" font-size="14" text-anchor="start" fill="#9b9ea6" >(h)</text>
<circle cx="961.7" cy="481" r="7" fill="#409eff"/>
<text x="978.7" y="484.5" font-size="12" text-anchor="start" fill="#9b9ea6" >空调</text>
<circle cx="1020" cy="481" r="7" fill="#36c591"/>
<text x="1037" y="484.5" font-size="12" text-anchor="start" fill="#9b9ea6" >照明</text>
<circle cx="1078.3" cy="481" r="7" fill="#f56c6c"/>
<text x="1095.3" y="484.5" font-size="12" text-anchor="start" fill="#9b9ea6" >动力</text>
<circle cx="1136.5" cy="481" r="7" fill="#5f6a8f"/>
<text x="1153.5" y="484.5" font-size="12" text-anchor="start" fill="#9b9ea6" >特殊</text>
<path d="M1413,440.5H1846" stroke="#4a4f5e" stroke-width="1"/>
<text x="1404.5" y="442.7" font-size="12" text-anchor="end" fill="#9b9ea6" >0</text>
<path d="M1413,399.5H1846" stroke="#323747" stroke-width="1"/>
<text x="1404.5" y="402.3" font-size="12" text-anchor="end" fill="#9b9ea6" >0.2</text>
<path d="M1413,359.5H1846" stroke="#323747" stroke-width="1"/>
<text x="1404.5" y="361.9" font-size="12" text-anchor="end" fill="#9b9ea6" >0.4</text>
<path d="M1413,318.5H1846" stroke="#323747" stroke-width="1"/>
<text x="1404.5" y="321.5" font-size="12" text-anchor="end" fill="#9b9ea6" >0.6</text>
<path d="M1413,278.5H1846" stroke="#323747" stroke-width="1"/>
<text x="1404.5" y="281.1" font-size="12" text-anchor="end" fill="#9b9ea6" >0.8</text>
<path d="M1413,238.5H1846" stroke="#323747" stroke-width="1"/>
<text x="1404.5" y="240.7" font-size="12" text-anchor="end" fill="#9b9ea6" >1</text>
<text x="1432.6818181818182" y="457" font-size="12" text-anchor="middle" fill="#9b9ea6" >一楼</text>
<text x="1472.0454545454545" y="457" font-size="12" text-anchor="middle" fill="#9b9ea6" >二楼</text>
<text x="1511.409090909091" y="457" font-size="12" text-anchor="middle" fill="#9b9ea6" >三楼</text>
<text x="1550.7727272727273" y="457" font-size="12" text-anchor="middle" fill="#9b9ea6" >四楼</text>
<text x="1590.1363636363637" y="457" font-size="12" text-anchor="middle" fill="#9b9ea6" >五楼</text>
<text x="1629.5" y="457" font-size="12" text-anchor="middle" fill="#9b9ea6" >六楼</text>
<text x="1668.8636363636365" y="457" font-size="12" text-anchor="middle" fill="#9b9ea6" >七楼</text>
<text x="1708.2272727272727" y="457" font-size="12" text-anchor="middle" fill="#9b9ea6" >八楼</text>
<text x="1747.5909090909092" y="457" font-size="12" text-anchor="middle" fill="#9b9ea6" >九楼</text>
<text x="1786.9545454545455" y="457" font-size="12" text-anchor="middle" fill="#9b9ea6" >十楼</text>
<text x="1826.318181818182" y="457" font-size="12" text-anchor="middle" fill="#9b9ea6" >十一楼</text>
<path d="M1432.7,439.5 H1826.3" stroke="#5f6a8f" stroke-width="2"/>
<text x="1854" y="448" font-size="14" text-anchor="start" fill="#9b9ea6" >(h)</text>
<circle cx="1519" cy="481" r="7" fill="#409eff"/>
<text x="1536" y="484.5" font-size="12" text-anchor="start" fill="#9b9ea6" >空调</text>
<circle cx="1577.4" cy="481" r="7" fill="#36c591"/>
<text x="1594.4" y="484.5" font-size="12" text-anchor="start" fill="#9b9ea6" >照明</text>
<circle cx="1636" cy="481" r="7" fill="#f56c6c"/>
<text x="1653" y="484.5" font-size="12" text-anchor="start" fill="#9b9ea6" >动力</text>
<circle cx="1694.8" cy="481" r="7" fill="#5f6a8f"/>
<text x="1711.8" y="484.5" font-size="12" text-anchor="start" fill="#9b9ea6" >特殊</text>
<path d="M326,924.5H1015" stroke="#4a4f5e" stroke-width="1"/>
<text x="318.5" y="926.9" font-size="12" text-anchor="end" fill="#9b9ea6" >0</text>
<path d="M326,879.5H1015" stroke="#323747" stroke-width="1"/>
<text x="318.5" y="881.96" font-size="12" text-anchor="end" fill="#9b9ea6" >50</text>
<path d="M326,834.5H1015" stroke="#323747" stroke-width="1"/>
<text x="318.5" y="837.02" font-size="12" text-anchor="end" fill="#9b9ea6" >100</text>
<path d="M326,789.5H1015" stroke="#323747" stroke-width="1"/>
<text x="318.5" y="792.0799999999999" font-size="12" text-anchor="end" fill="#9b9ea6" >150</text>
<path d="M326,744.5H1015" stroke="#323747" stroke-width="1"/>
<text x="318.5" y="747.14" font-size="12" text-anchor="end" fill="#9b9ea6" >200</text>
<path d="M326,699.5H1015" stroke="#323747" stroke-width="1"/>
<text x="318.5" y="702.2" font-size="12" text-anchor="end" fill="#9b9ea6" >250</text>
<defs><linearGradient id="eg" x1="0" y1="743" x2="0" y2="924" gradientUnits="userSpaceOnUse"><stop offset="0" stop-color="#2397c2"/><stop offset="0.25" stop-color="#3386a4"/><stop offset="0.5" stop-color="#486476"/><stop offset="0.75" stop-color="#3d4554"/><stop offset="1" stop-color="#282c39"/></linearGradient><linearGradient id="wg" x1="0" y1="722" x2="0" y2="924" gradientUnits="userSpaceOnUse"><stop offset="0" stop-color="#3aa38c"/><stop offset="0.25" stop-color="#468c80"/><stop offset="0.5" stop-color="#4c6c6f"/><stop offset="0.75" stop-color="#414956"/><stop offset="1" stop-color="#2a2e3b"/></linearGradient></defs>
<path d="M441.3,743.5 C441.3,743.5 555.5,784.8 670.8,784.8 C762.8,784.8 900.3,765.2 900.3,765.2 L900.3,923.9 L441.3,923.9Z" fill="url(#eg)"/>
<path d="M441.3,743.5 C441.3,743.5 555.5,784.8 670.8,784.8 C762.8,784.8 900.3,765.2 900.3,765.2" fill="none" stroke="#1cb6ea" stroke-width="2"/>
<path d="M441.3,879.5H900.3" stroke="#ffffff" stroke-opacity="0.07" stroke-width="1"/>
<path d="M441.3,834.5H900.3" stroke="#ffffff" stroke-opacity="0.07" stroke-width="1"/>
<path d="M441.3,789.5H900.3" stroke="#ffffff" stroke-opacity="0.07" stroke-width="1"/>
<path d="M441.3,744.5H900.3" stroke="#ffffff" stroke-opacity="0.07" stroke-width="1"/>
<path d="M441.3,699.5H900.3" stroke="#ffffff" stroke-opacity="0.07" stroke-width="1"/>
<text x="1017" y="931" font-size="14" text-anchor="start" fill="#9b9ea6" >(h)</text>
<path d="M1138,924.5H1833" stroke="#4a4f5e" stroke-width="1"/>
<text x="1129.5" y="926.9" font-size="12" text-anchor="end" fill="#9b9ea6" >0</text>
<path d="M1138,868.5H1833" stroke="#323747" stroke-width="1"/>
<text x="1129.5" y="870.73" font-size="12" text-anchor="end" fill="#9b9ea6" >10</text>
<path d="M1138,812.5H1833" stroke="#323747" stroke-width="1"/>
<text x="1129.5" y="814.56" font-size="12" text-anchor="end" fill="#9b9ea6" >20</text>
<path d="M1138,755.5H1833" stroke="#323747" stroke-width="1"/>
<text x="1129.5" y="758.39" font-size="12" text-anchor="end" fill="#9b9ea6" >30</text>
<path d="M1138,699.5H1833" stroke="#323747" stroke-width="1"/>
<text x="1129.5" y="702.22" font-size="12" text-anchor="end" fill="#9b9ea6" >40</text>
<rect x="1254" y="722.3" width="463" height="201.6" fill="url(#wg)"/>
<path d="M1254,723.3H1717" stroke="#3cc49d" stroke-width="2"/>
<path d="M1254,868.5H1717" stroke="#ffffff" stroke-opacity="0.07" stroke-width="1"/>
<path d="M1254,812.5H1717" stroke="#ffffff" stroke-opacity="0.07" stroke-width="1"/>
<path d="M1254,755.5H1717" stroke="#ffffff" stroke-opacity="0.07" stroke-width="1"/>
<text x="1835" y="931" font-size="14" text-anchor="start" fill="#9b9ea6" >(h)</text></svg>
<!--/CHARTS-->

<div class="a" style="left:221px;top:88px;width:12px;height:857px;background:linear-gradient(90deg,rgba(0,0,0,0.18),rgba(0,0,0,0))"></div>
<!-- scrollbar -->
<div class="a" style="left:1896px;top:98px;width:8px;height:401px;border-radius:4px;background:#2a2f3d"></div>


</body>
</html>
